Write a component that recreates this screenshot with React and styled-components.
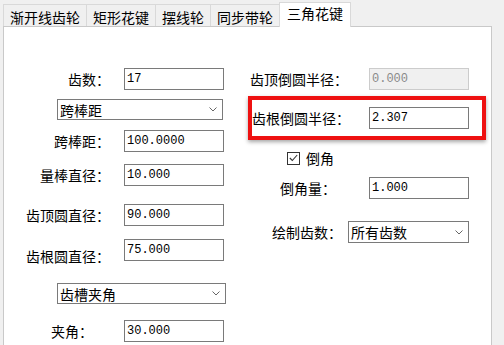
import React from 'react';
import styled, { createGlobalStyle } from 'styled-components';

const GlobalStyle = createGlobalStyle`
  html, body {
    margin: 0;
    padding: 0;
    background: #f0f0f0;
    overflow: hidden;
  }
  body {
    font-family: "Noto Sans CJK SC", "Noto Sans", sans-serif;
    color: #000;
  }
`;

const Window = styled.div`
  display: flex;
  flex-direction: column;
  width: 504px;
  height: 345px;
  background: #f0f0f0;
`;

const TabBar = styled.div`
  display: flex;
  align-items: flex-end;
  height: 26px;
  padding-left: 3px;
  flex-shrink: 0;
`;

const Tab = styled.div`
  position: relative;
  z-index: ${(p) => (p.$active ? 2 : 1)};
  box-sizing: border-box;
  height: ${(p) => (p.$active ? '25px' : '22px')};
  margin-bottom: ${(p) => (p.$active ? '-1px' : '0')};
  margin-left: -1px;
  padding: ${(p) => (p.$active ? '1px 7px 0' : '3px 6px 0')};
  border: 1px solid #d9d9d9;
  border-bottom: none;
  background: ${(p) => (p.$active ? '#ffffff' : '#f0f0f0')};
  font-size: 14px;
  line-height: 18px;
  white-space: nowrap;

  &:first-child {
    margin-left: 0;
  }
`;

const Panel = styled.div`
  flex: 1;
  display: grid;
  grid-template-columns: 244px 1fr;
  align-items: start;
  margin: 0 12px 0 3px;
  border: 1px solid #c9c9c9;
  border-bottom: none;
  background: #ffffff;
`;

const Column = styled.div`
  display: flex;
  flex-direction: column;
  align-items: flex-start;
`;

const LeftRow = styled.div`
  display: grid;
  grid-template-columns: 106px 100px;
  column-gap: 14px;
  align-items: center;
  margin-top: ${(p) => p.$top}px;
`;

const RightRow = styled.div`
  display: grid;
  grid-template-columns: ${(p) => p.$cols};
  align-items: center;
  margin-top: ${(p) => p.$top || 0}px;
`;

const Label = styled.div`
  justify-self: ${(p) => (p.$start ? 'start' : 'end')};
  padding-left: ${(p) => p.$indent || 0}px;
  padding-right: ${(p) => p.$pad || 0}px;
  margin-top: ${(p) => p.$drop || 0}px;
  margin-bottom: ${(p) => -(p.$drop || 0)}px;
  font-size: 14px;
  line-height: 20px;
  white-space: nowrap;
`;

const TextBox = styled.div`
  box-sizing: border-box;
  width: 100px;
  height: 22px;
  padding: 0 2px;
  display: flex;
  align-items: center;
  border: 1px solid ${(p) => (p.$disabled ? '#cccccc' : '#7a7a7a')};
  background: ${(p) => (p.$disabled ? '#f0f0f0' : '#ffffff')};
  color: ${(p) => (p.$disabled ? '#8a8a8a' : '#000000')};
  font-family: "Liberation Mono", "DejaVu Sans Mono", monospace;
  font-size: 12px;
`;

const SelectBox = styled.div`
  box-sizing: border-box;
  width: ${(p) => p.$width}px;
  height: ${(p) => p.$height || 21}px;
  margin-top: ${(p) => p.$top || 0}px;
  margin-left: ${(p) => p.$indent || 0}px;
  padding: 0 5px 0 2px;
  display: flex;
  align-items: center;
  justify-content: space-between;
  border: 1px solid #7a7a7a;
  background: #ffffff;
  font-size: 14px;
  white-space: nowrap;
`;

const Highlight = styled.div`
  box-sizing: border-box;
  width: 238px;
  height: 44px;
  margin-top: 6px;
  display: grid;
  grid-template-columns: 117px 100px;
  align-items: center;
  border: 4px solid #ee1111;
  box-shadow: 0 2px 4px rgba(0, 0, 0, 0.35);
`;

const CheckRow = styled.div`
  display: flex;
  align-items: center;
  gap: 6px;
  height: 16px;
  margin-top: 10px;
  padding-left: 39px;
  font-size: 14px;
`;

const CheckMark = styled.span`
  box-sizing: border-box;
  width: 13px;
  height: 13px;
  border: 1px solid #333333;
  background: #ffffff;
  display: flex;
  align-items: center;
  justify-content: center;
`;

function Chevron() {
  return (
    <svg width="8" height="5" viewBox="0 0 8 5">
      <polyline points="0.5,0.5 4,4 7.5,0.5" fill="none" stroke="#666" strokeWidth="1" />
    </svg>
  );
}

function Select({ children, ...rest }) {
  return (
    <SelectBox {...rest}>
      <span>{children}</span>
      <Chevron />
    </SelectBox>
  );
}

const tabs = ['渐开线齿轮', '矩形花键', '摆线轮', '同步带轮', '三角花键'];

export default function App() {
  return (
    <Window>
      <GlobalStyle />
      <TabBar>
        {tabs.map((t, i) => (
          <Tab key={t} $active={i === tabs.length - 1}>{t}</Tab>
        ))}
      </TabBar>
      <Panel>
        <Column>
          <LeftRow $top={41}>
            <Label>齿数：</Label>
            <TextBox>17</TextBox>
          </LeftRow>
          <Select $top={9} $indent={53} $width={166}>跨棒距</Select>
          <LeftRow $top={10}>
            <Label>跨棒距：</Label>
            <TextBox>100.0000</TextBox>
          </LeftRow>
          <LeftRow $top={12}>
            <Label>量棒直径：</Label>
            <TextBox>10.000</TextBox>
          </LeftRow>
          <LeftRow $top={18}>
            <Label>齿顶圆直径：</Label>
            <TextBox>90.000</TextBox>
          </LeftRow>
          <LeftRow $top={13}>
            <Label $drop={6}>齿根圆直径：</Label>
            <TextBox>75.000</TextBox>
          </LeftRow>
          <Select $top={22} $indent={53} $width={169}>齿槽夹角</Select>
          <LeftRow $top={16}>
            <Label $pad={17}>夹角：</Label>
            <TextBox>30.000</TextBox>
          </LeftRow>
        </Column>
        <Column>
          <RightRow $top={41} $cols="121px 100px">
            <Label $start $indent={2}>齿顶倒圆半径：</Label>
            <TextBox $disabled>0.000</TextBox>
          </RightRow>
          <Highlight>
            <Label $start>齿根倒圆半径：</Label>
            <TextBox>2.307</TextBox>
          </Highlight>
          <CheckRow>
            <CheckMark>
              <svg width="9" height="8" viewBox="0 0 9 8">
                <polyline points="0.8,4 3.3,6.5 8.2,1" fill="none" stroke="#333" strokeWidth="1.1" />
              </svg>
            </CheckMark>
            倒角
          </CheckRow>
          <RightRow $top={11} $cols="121px 100px">
            <Label $start $indent={32}>倒角量：</Label>
            <TextBox>1.000</TextBox>
          </RightRow>
          <RightRow $top={22} $cols="100px 121px">
            <Label $start $indent={24}>绘制齿数：</Label>
            <Select $width={121} $height={22}>所有齿数</Select>
          </RightRow>
        </Column>
      </Panel>
    </Window>
  );
}
